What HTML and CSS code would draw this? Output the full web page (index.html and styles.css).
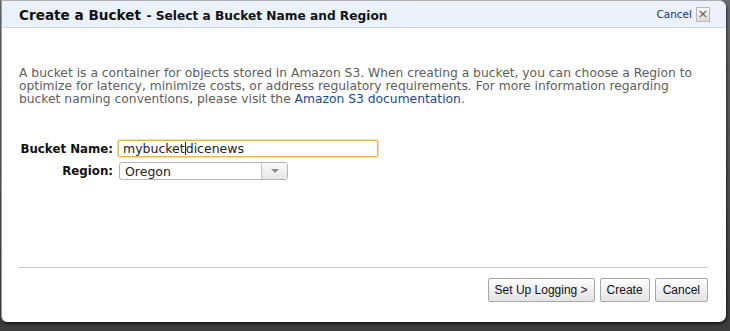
FILE: index.html
```html
<!DOCTYPE html>
<html>
<head>
<meta charset="utf-8">
<link rel="stylesheet" href="styles.css">
</head>
<body>
<div class="backdrop">
  <div class="dialog">
    <div class="header">
      <div class="title"><span class="title-main">Create a Bucket</span> <span class="title-sub">- Select a Bucket Name and Region</span></div>
      <div class="close"><a class="close-link">Cancel</a><span class="close-x">×</span></div>
    </div>
    <div class="content">
      <p class="intro">A bucket is a container for objects stored in Amazon S3. When creating a bucket, you can choose a Region to optimize for latency, minimize costs, or address regulatory requirements. For more information regarding bucket naming conventions, please visit the <a class="doc-link">Amazon S3 documentation</a>.</p>
      <div class="form">
        <div class="row">
          <label class="label">Bucket Name:</label>
          <div class="input"><span>mybucket</span><span class="caret"></span><span>dicenews</span></div>
        </div>
        <div class="row">
          <label class="label">Region:</label>
          <div class="select"><span class="select-value">Oregon</span><span class="select-btn"><span class="tri"></span></span></div>
        </div>
      </div>
    </div>
    <div class="footer">
      <div class="divider"></div>
      <div class="buttons">
        <button class="btn">Set Up Logging &gt;</button>
        <button class="btn">Create</button>
        <button class="btn btn-cancel">Cancel</button>
      </div>
    </div>
  </div>
</div>
</body>
</html>
```
FILE: styles.css
```css
html, body {
  margin: 0;
  padding: 0;
}
body {
  width: 730px;
  height: 331px;
  overflow: hidden;
  background: linear-gradient(#6a6a6a, #3c3c3c);
}
.backdrop {
  width: 730px;
  height: 331px;
}
.dialog {
  width: 724px;
  height: 321px;
  margin-left: 1px;
  background: #fff;
  border-left: 1px solid #9a9a9a;
  border-top: 1px solid #b0b0b0;
  border-radius: 0 7px 7px 6px;
  box-shadow: 1px 2px 3px rgba(0,0,0,0.6);
  display: flex;
  flex-direction: column;
  font-family: "DejaVu Sans", Verdana, sans-serif;
}
.header {
  height: 26px;
  background: #eaf1fb;
  border-bottom: 1px solid #c8d9ec;
  border-top-right-radius: 7px;
  display: flex;
  align-items: center;
  justify-content: space-between;
  padding: 0 16px 0 17px;
}
.title {
  color: #111;
  font-weight: bold;
  white-space: nowrap;
}
.title-main { font-size: 13.6px; }
.title-sub { font-size: 12.2px; }
.close {
  display: flex;
  align-items: center;
  gap: 4px;
}
.close-link {
  color: #1c2f7a;
  font-size: 10.5px;
}
.close-x {
  width: 12px;
  height: 13px;
  border: 1px solid #b8b8b8;
  background: linear-gradient(#fafafa, #dcdcdc);
  color: #555;
  font-size: 13px;
  line-height: 12px;
  text-align: center;
  font-family: "DejaVu Sans", sans-serif;
}
.content {
  flex: 1;
  padding: 39px 16px 0 17px;
}
.intro {
  margin: 0;
  color: #5e5e5e;
  font-size: 12.3px;
  line-height: 13px;
}
.doc-link {
  color: #1a4a8c;
}
.form {
  margin-top: 34px;
  display: flex;
  flex-direction: column;
  gap: 5px;
}
.row {
  display: flex;
  align-items: center;
}
.label {
  width: 94px;
  flex-shrink: 0;
  white-space: nowrap;
  text-align: right;
  font-weight: bold;
  font-size: 11.8px;
  color: #111;
  margin-right: 5px;
}
.input {
  width: 250px;
  height: 15px;
  border: 1px solid #e0b659;
  border-radius: 2px;
  box-shadow: 0 0 0 1px #f5dfa9;
  padding: 0 4px;
  font-size: 12.5px;
  line-height: 15px;
  color: #222;
  display: flex;
  align-items: center;
}
.caret {
  width: 1px;
  height: 13px;
  background: #222;
}
.select {
  margin-left: 1px;
  width: 167px;
  height: 16px;
  border: 1px solid #b4b4b4;
  border-radius: 3px;
  display: flex;
  align-items: center;
  justify-content: space-between;
  font-size: 12.5px;
  color: #222;
  background: #fff;
}
.select-value { padding-left: 5px; }
.select-btn {
  width: 25px;
  height: 16px;
  border-left: 1px solid #c8c8c8;
  background: linear-gradient(#fafafa, #e6e6e6);
  border-radius: 0 3px 3px 0;
  display: flex;
  align-items: center;
  justify-content: center;
}
.tri {
  width: 0;
  height: 0;
  border-left: 4px solid transparent;
  border-right: 4px solid transparent;
  border-top: 4px solid #888;
}
.footer {
  padding: 0 18px 20px 16px;
}
.divider {
  height: 1px;
  background: #c8c8c8;
}
.buttons {
  margin-top: 10px;
  display: flex;
  justify-content: flex-end;
  gap: 5px;
}
.btn {
  height: 24px;
  padding: 0 6px;
  font-family: "Liberation Sans", Arial, sans-serif;
  font-size: 12px;
  color: #111;
  border: 1px solid #a8a8a8;
  border-radius: 2px;
  background: linear-gradient(#fdfdfd, #e4e4e4);
}
.btn-cancel {
  padding: 0 7px;
}
```
